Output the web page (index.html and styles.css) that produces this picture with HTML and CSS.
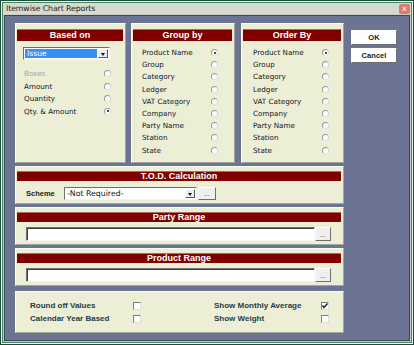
FILE: index.html
```html
<!DOCTYPE html>
<html lang="en">
<head>
    <meta charset="UTF-8">
    <meta name="viewport" content="width=device-width, initial-scale=1.0">
    <title>Itemwise Chart Reports</title>
    <link rel="stylesheet" href="styles.css">
</head>
<body>
<div class="window">
    <div class="titlebar">
        <span class="title">Itemwise Chart Reports</span>
        <span class="close">&#215;</span>
    </div>

    <div class="client">
        <div class="top-row">
            <div class="panel based">
                <div class="head">Based on</div>
                <div class="combo">
                    <span class="combo-text"><span class="sel">Issue</span></span>
                    <span class="combo-arrow"></span>
                </div>
                <ul class="options">
                    <li class="disabled">Boxes <span class="radio"></span></li>
                    <li>Amount <span class="radio"></span></li>
                    <li>Quantity <span class="radio"></span></li>
                    <li>Qty. &amp; Amount <span class="radio checked"></span></li>
                </ul>
            </div>

            <div class="panel group">
                <div class="head">Group by</div>
                <ul class="options">
                    <li>Product Name <span class="radio checked"></span></li>
                    <li>Group <span class="radio"></span></li>
                    <li>Category <span class="radio"></span></li>
                    <li>Ledger <span class="radio"></span></li>
                    <li>VAT Category <span class="radio"></span></li>
                    <li>Company <span class="radio"></span></li>
                    <li>Party Name <span class="radio"></span></li>
                    <li>Station <span class="radio"></span></li>
                    <li>State <span class="radio"></span></li>
                </ul>
            </div>

            <div class="panel order">
                <div class="head">Order By</div>
                <ul class="options">
                    <li>Product Name <span class="radio checked"></span></li>
                    <li>Group <span class="radio"></span></li>
                    <li>Category <span class="radio"></span></li>
                    <li>Ledger <span class="radio"></span></li>
                    <li>VAT Category <span class="radio"></span></li>
                    <li>Company <span class="radio"></span></li>
                    <li>Party Name <span class="radio"></span></li>
                    <li>Station <span class="radio"></span></li>
                    <li>State <span class="radio"></span></li>
                </ul>
            </div>

            <div class="buttons">
                <button class="btn">OK</button>
                <button class="btn">Cancel</button>
            </div>
        </div>

        <div class="panel wide">
            <div class="head">T.O.D. Calculation</div>
            <div class="field-row">
                <span class="label">Scheme</span>
                <div class="combo scheme">
                    <span class="combo-text">-Not Required-</span>
                    <span class="combo-arrow"></span>
                </div>
                <button class="dots">...</button>
            </div>
        </div>

        <div class="panel wide">
            <div class="head">Party Range</div>
            <div class="field-row">
                <input type="text" class="range-input">
                <button class="dots">...</button>
            </div>
        </div>

        <div class="panel wide">
            <div class="head">Product Range</div>
            <div class="field-row">
                <input type="text" class="range-input">
                <button class="dots">...</button>
            </div>
        </div>

        <div class="panel checks">
            <span class="check-label">Round off Values</span>
            <span class="checkbox"></span>
            <span class="check-label">Show Monthly Average</span>
            <span class="checkbox">
                <svg width="6" height="6" viewBox="0 0 6 6"><polyline points="0.5,2.5 2,4.5 5.5,0.5" fill="none" stroke="#111" stroke-width="1.3"/></svg>
            </span>
            <span class="check-label">Calendar Year Based</span>
            <span class="checkbox"></span>
            <span class="check-label">Show Weight</span>
            <span class="checkbox"></span>
        </div>
    </div>
</div>
</body>
</html>
```

FILE: styles.css
```css
* {
    margin: 0;
    padding: 0;
    box-sizing: border-box;
}

body {
    background-color: #6b7492;
    font-family: "DejaVu Sans", Verdana, sans-serif;
    font-size: 7.2px;
    color: #141428;
}

.window {
    width: 414px;
    height: 345px;
    display: flex;
    flex-direction: column;
    border: 1px solid #24493b;
    padding: 2px;
    background-color: #d6dacf;
    box-shadow: inset 0 0 0 1px #eef2ec, inset 0 0 0 2px #3b8a66;
}

.titlebar {
    height: 11px;
    display: flex;
    align-items: center;
    padding-left: 3px;
}

.title {
    font-size: 7.8px;
    letter-spacing: -0.1px;
    color: #1a1a1a;
}

.close {
    margin-left: auto;
    margin-right: 1px;
    width: 11px;
    height: 10px;
    border-radius: 2px;
    background-color: #d97d6e;
    color: #fff;
    font-family: "Liberation Sans", Arial, sans-serif;
    font-size: 9px;
    line-height: 10px;
    text-align: center;
}

.client {
    flex: 1;
    border: 1px solid #c9cdc4;
    box-shadow: inset 0 0 0 1px #3e4656;
    background-color: #6b7492;
    padding: 8px 0 0 11px;
}

.top-row {
    display: flex;
    height: 140px;
}

.panel {
    background-color: #ecefd6;
    border: 1px solid;
    border-color: #fbfcf2 #a2a696 #a2a696 #fbfcf2;
}

.based {
    width: 111px;
}

.group {
    width: 104px;
    margin-left: 5px;
}

.order {
    width: 103px;
    margin-left: 6px;
}

.head {
    background-color: #800000;
    color: #fff;
    font-family: "Liberation Sans", Arial, sans-serif;
    font-weight: bold;
    font-size: 9px;
    text-align: center;
    box-shadow: inset 0 1px 0 #a86a6a;
}

.top-row .head {
    margin: 5px 2px 0 1px;
    height: 12px;
    line-height: 12px;
}

/* dropdowns */
.combo {
    display: flex;
    background-color: #fff;
    border: 1px solid;
    border-color: #6f6f6f #f4f4f4 #f4f4f4 #6f6f6f;
    padding: 1px;
}

.based .combo {
    margin: 6px 0 0 7px;
    width: 87px;
    height: 13px;
}

.combo-text {
    flex: 1;
    line-height: 9px;
    white-space: nowrap;
    overflow: hidden;
}

.sel {
    display: block;
    background-color: #3b8ff4;
    color: #fff;
    font-size: 7.6px;
    padding-left: 2px;
    margin-right: 1px;
    height: 9px;
}

.combo-arrow {
    width: 10px;
    position: relative;
    background-color: #ececec;
    border: 1px solid;
    border-color: #fff #5a5a5a #5a5a5a #fff;
}

.combo-arrow::after {
    content: "";
    position: absolute;
    left: 2px;
    top: 3px;
    border-left: 2.5px solid transparent;
    border-right: 2.5px solid transparent;
    border-top: 3px solid #111;
}

/* radio lists */
.options {
    list-style: none;
}

.options li {
    display: flex;
    justify-content: space-between;
    align-items: center;
    height: 12.2px;
    white-space: nowrap;
}

.based .options {
    margin-top: 7.5px;
    padding: 0 14px 0 8px;
}

.based .options li {
    height: 12.5px;
}

.group .options {
    margin-top: 5.5px;
    padding: 0 16px 0 10px;
}

.order .options {
    margin-top: 5.5px;
    padding: 0 14px 0 11px;
}

.options li.disabled {
    color: #a3a3a3;
}

.radio {
    position: relative;
    width: 7px;
    height: 7px;
    border-radius: 50%;
    background-color: #fff;
    border: 1px solid;
    border-color: #9a9a9a #d2d2d2 #e2e2e2 #9a9a9a;
}

.radio.checked::after {
    content: "";
    position: absolute;
    left: 1.5px;
    top: 1.5px;
    width: 2px;
    height: 2px;
    border-radius: 50%;
    background-color: #111;
}

/* buttons */
.buttons {
    width: 46px;
    margin-left: 7px;
    padding-top: 7px;
    display: flex;
    flex-direction: column;
    gap: 3px;
}

.btn {
    height: 15px;
    background-color: #fff;
    border: 1px solid;
    border-color: #fff #6e6e6e #6e6e6e #fff;
    font-family: "Liberation Sans", Arial, sans-serif;
    font-weight: bold;
    font-size: 7.6px;
    color: #1a1a1a;
}

/* lower panels */
.wide {
    width: 329px;
    height: 38px;
    margin-top: 3px;
}

.wide .head {
    margin: 4px 2px 0 1px;
    height: 10px;
    line-height: 10px;
}

.field-row {
    display: flex;
    align-items: center;
    padding-left: 10px;
}

.wide:nth-child(2) .field-row {
    margin-top: 6px;
    height: 13px;
}

.label {
    width: 38px;
    font-family: "Liberation Sans", Arial, sans-serif;
    font-weight: bold;
    font-size: 7.5px;
    color: #202020;
}

.scheme {
    width: 133px;
    height: 13px;
}

.scheme .combo-text {
    font-size: 7.8px;
    padding-left: 1px;
    color: #111;
}

.dots {
    width: 18px;
    height: 13px;
    margin-left: 1px;
    background-color: #efefef;
    border: 1px solid;
    border-color: #fff #6e6e6e #6e6e6e #fff;
    font-family: "DejaVu Sans", Verdana, sans-serif;
    font-size: 6px;
    line-height: 9px;
    color: #222;
}

.range-input {
    width: 289px;
    height: 14px;
    margin-top: 5px;
    background-color: #fff;
    border: 1px solid;
    border-color: #6f6f6f #f4f4f4 #f4f4f4 #6f6f6f;
    box-shadow: inset 1px 1px 0 #404040;
}

.range-input + .dots {
    width: 16px;
    height: 14px;
    margin-top: 5px;
    margin-left: 0;
}

/* check options */
.checks {
    width: 329px;
    height: 42px;
    margin-top: 5px;
    padding: 7px 0 0 14px;
    display: grid;
    grid-template-columns: 103px 81px 107px 8px;
    grid-auto-rows: 13px;
    align-items: center;
}

.check-label {
    font-family: "Liberation Sans", Arial, sans-serif;
    font-weight: bold;
    font-size: 8px;
    color: #1c3b4c;
    white-space: nowrap;
}

.checkbox {
    width: 8px;
    height: 8px;
    display: flex;
    align-items: center;
    justify-content: center;
    background-color: #fff;
    border: 1px solid;
    border-color: #7e7e7e #dedede #dedede #7e7e7e;
}
```
